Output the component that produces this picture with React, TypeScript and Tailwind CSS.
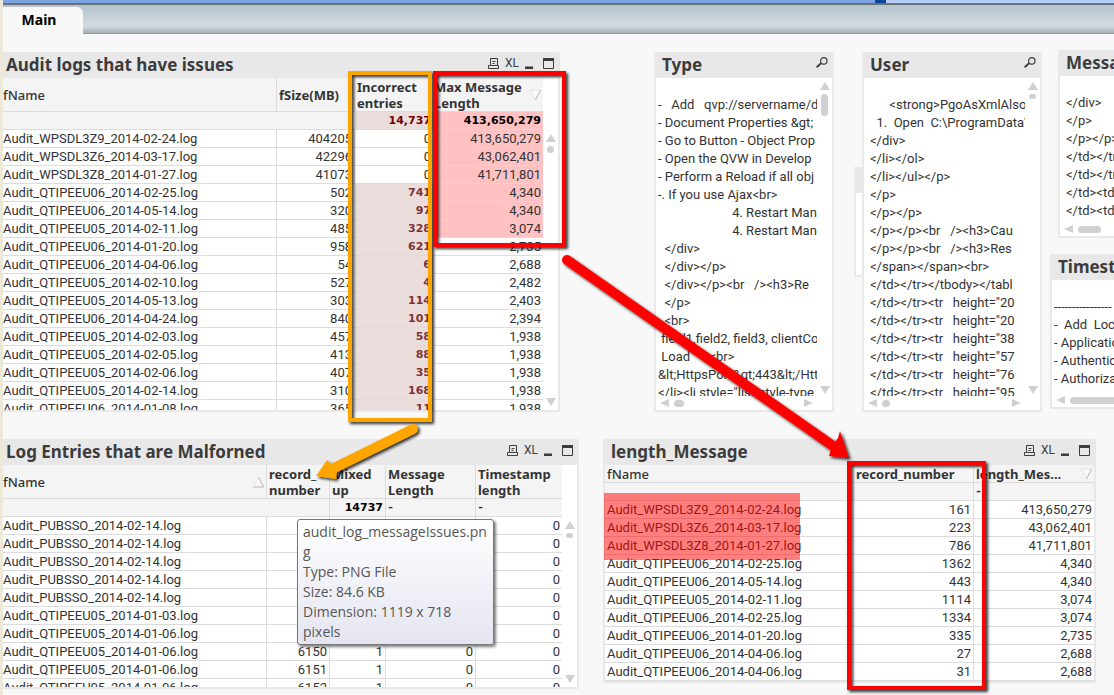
import React, { ReactNode } from "react";
import { twMerge } from "tailwind-merge";

interface Row {
  name: string;
  values: string[];
}

const auditRows: Row[] = [
  { name: "Audit_WPSDL3Z9_2014-02-24.log", values: ["404205", "0", "413,650,279"] },
  { name: "Audit_WPSDL3Z6_2014-03-17.log", values: ["42296", "0", "43,062,401"] },
  { name: "Audit_WPSDL3Z8_2014-01-27.log", values: ["41073", "0", "41,711,801"] },
  { name: "Audit_QTIPEEU06_2014-02-25.log", values: ["502", "741", "4,340"] },
  { name: "Audit_QTIPEEU06_2014-05-14.log", values: ["320", "97", "4,340"] },
  { name: "Audit_QTIPEEU05_2014-02-11.log", values: ["485", "328", "3,074"] },
  { name: "Audit_QTIPEEU06_2014-01-20.log", values: ["958", "621", "2,735"] },
  { name: "Audit_QTIPEEU06_2014-04-06.log", values: ["54", "6", "2,688"] },
  { name: "Audit_QTIPEEU05_2014-02-10.log", values: ["527", "4", "2,482"] },
  { name: "Audit_QTIPEEU05_2014-05-13.log", values: ["303", "114", "2,403"] },
  { name: "Audit_QTIPEEU06_2014-04-24.log", values: ["840", "101", "2,394"] },
  { name: "Audit_QTIPEEU05_2014-02-03.log", values: ["457", "58", "1,938"] },
  { name: "Audit_QTIPEEU05_2014-02-05.log", values: ["413", "88", "1,938"] },
  { name: "Audit_QTIPEEU05_2014-02-06.log", values: ["407", "35", "1,938"] },
  { name: "Audit_QTIPEEU05_2014-02-14.log", values: ["310", "168", "1,938"] },
  { name: "Audit_QTIPEEU06_2014-01-08.log", values: ["365", "11", "1,938"] },
];

const malformedRows: Row[] = [
  { name: "Audit_PUBSSO_2014-02-14.log", values: ["", "", "", "0"] },
  { name: "Audit_PUBSSO_2014-02-14.log", values: ["", "", "", "0"] },
  { name: "Audit_PUBSSO_2014-02-14.log", values: ["", "", "", "0"] },
  { name: "Audit_PUBSSO_2014-02-14.log", values: ["", "", "", "0"] },
  { name: "Audit_PUBSSO_2014-02-14.log", values: ["", "", "", "0"] },
  { name: "Audit_QTIPEEU05_2014-01-03.log", values: ["", "", "", "0"] },
  { name: "Audit_QTIPEEU05_2014-01-06.log", values: ["", "", "", "0"] },
  { name: "Audit_QTIPEEU05_2014-01-06.log", values: ["6150", "1", "0", "0"] },
  { name: "Audit_QTIPEEU05_2014-01-06.log", values: ["6151", "1", "0", "0"] },
  { name: "Audit_QTIPEEU05_2014-01-06.log", values: ["6152", "1", "0", "0"] },
];

const lengthRows: Row[] = [
  { name: "Audit_WPSDL3Z9_2014-02-24.log", values: ["161", "413,650,279"] },
  { name: "Audit_WPSDL3Z6_2014-03-17.log", values: ["223", "43,062,401"] },
  { name: "Audit_WPSDL3Z8_2014-01-27.log", values: ["786", "41,711,801"] },
  { name: "Audit_QTIPEEU06_2014-02-25.log", values: ["1362", "4,340"] },
  { name: "Audit_QTIPEEU06_2014-05-14.log", values: ["443", "4,340"] },
  { name: "Audit_QTIPEEU05_2014-02-11.log", values: ["1114", "3,074"] },
  { name: "Audit_QTIPEEU06_2014-02-25.log", values: ["1334", "3,074"] },
  { name: "Audit_QTIPEEU06_2014-01-20.log", values: ["335", "2,735"] },
  { name: "Audit_QTIPEEU06_2014-04-06.log", values: ["27", "2,688"] },
  { name: "Audit_QTIPEEU06_2014-04-06.log", values: ["31", "2,688"] },
];

const typeItems = [
  "",
  "-   Add   qvp://servername/d",
  "- Document Properties &gt;",
  "- Go to Button - Object Prop",
  "- Open the QVW in Develop",
  "- Perform a Reload if all obj",
  "-. If you use Ajax<br>",
  "                       4. Restart Mana",
  "                       4. Restart Mana",
  "  </div>",
  "  </div></p>",
  "  </div></p><br   /><h3>Re",
  "  </p>",
  "  <br>",
  " field1,field2, field3, clientCo",
  " Load      <br>",
  "&lt;HttpsPort&gt;443&lt;/Htt",
  "</li><li style=\"list-style-type",
];

const userItems = [
  "",
  "      <strong>PgoAsXmlAlso=",
  "  1.  Open  C:\\ProgramData\\",
  "</div>",
  "</li></ol>",
  "</li></ul></p>",
  "</p>",
  "</p></p>",
  "</p></p><br   /><h3>Cau",
  "</p></p><br   /><h3>Res",
  "</span></span><br>",
  "</td></tr></tbody></tabl",
  "</td></tr><tr   height=\"20",
  "</td></tr><tr   height=\"20",
  "</td></tr><tr   height=\"38",
  "</td></tr><tr   height=\"57",
  "</td></tr><tr   height=\"76",
  "</td></tr><tr   height=\"95",
];

const messageItems = ["", "</div>", "</p>", "</p></p>", "</td></tr>", "</td></tr>", "</td><td>", "</td><td>"];

const timestampItems = ["", "----------------", "-  Add  Local", "- Application", "- Authentication", "- Authorization"];

const arrowPaths = {
  up: "M5 0 L10 8 H0 Z",
  down: "M0 0 H10 L5 8 Z",
  left: "M0 4 L9 0 V8 Z",
  right: "M9 4 L0 0 V8 Z",
};

const ScrollArrow = ({ dir }: { dir: keyof typeof arrowPaths }) => (
  <button type="button" aria-label={`scroll ${dir}`} className="block shrink-0">
    <svg width="10" height="8" viewBox="0 0 10 8" className="block">
      <path d={arrowPaths[dir]} fill="#d0d0d0" />
    </svg>
  </button>
);

const VerticalScroll = ({ thumb, className }: { thumb: string; className?: string }) => (
  <div className={twMerge("flex w-[15px] shrink-0 flex-col items-center", className)}>
    <ScrollArrow dir="up" />
    <div className={twMerge("mt-1 w-[7px] rounded-full bg-[#d0d0d0]", thumb)} />
    <div className="grow" />
    <ScrollArrow dir="down" />
  </div>
);

const HorizontalScroll = ({ thumb }: { thumb: string }) => (
  <div className="flex h-[14px] items-center pr-[18px] pl-1">
    <ScrollArrow dir="left" />
    <div className={twMerge("ml-1 h-[7px] shrink-0 rounded-full bg-[#d0d0d0]", thumb)} />
    <div className="grow" />
    <ScrollArrow dir="right" />
  </div>
);

const SortMark = ({ up }: { up?: boolean }) => (
  <svg width="11" height="12" viewBox="0 0 11 12" className="mr-0.5 shrink-0" fill="none">
    {up ? (
      <>
        <path d="M0.5 11 L5.5 1 L10.5 11 Z" fill="#fafafa" />
        <path d="M0.5 11 L5.5 1" stroke="#e4e4e4" />
        <path d="M5.5 1 L10.5 11 H0.5" stroke="#b4b4b4" />
      </>
    ) : (
      <>
        <path d="M0.5 1 H10.5 L5.5 11 Z" fill="#fafafa" />
        <path d="M10.5 1 H0.5 L5.5 11" stroke="#e4e4e4" />
        <path d="M5.5 11 L10.5 1" stroke="#b4b4b4" />
      </>
    )}
  </svg>
);

const WindowIcons = () => (
  <div className="mt-[5px] flex h-[12px] items-end gap-1.5 self-start text-[#3c3c3c]">
    <button type="button" aria-label="Print">
      <svg width="11" height="11" viewBox="0 0 11 11" className="block" fill="none" stroke="currentColor">
        <path d="M2.5 7 V0.5 H9.5 V7 M4.5 3.5 H7.5 M4.5 5.5 H6.5" />
        <path d="M2.5 7.5 H0.5 V10.5 H10.5 V7.5 H2.5" />
      </svg>
    </button>
    <button type="button" className="font-[Roboto,sans-serif] text-[12px] leading-[12px]">
      XL
    </button>
    <button type="button" aria-label="Minimize">
      <svg width="8" height="11" viewBox="0 0 8 11" className="block">
        <path d="M0 8.5 H8 V11 H0 Z" fill="currentColor" />
      </svg>
    </button>
    <button type="button" aria-label="Maximize" className="ml-1">
      <svg width="11" height="11" viewBox="0 0 11 11" className="block">
        <path d="M0.5 0.5 H10.5 V10.5 H0.5 Z" fill="none" stroke="currentColor" />
        <path d="M0 0 H11 V3 H0 Z" fill="currentColor" />
      </svg>
    </button>
  </div>
);

const SearchIcon = () => (
  <button type="button" aria-label="Search" className="mt-[5px] self-start text-[#3c3c3c]">
    <svg width="12" height="11" viewBox="0 0 12 11" className="block" fill="none" stroke="currentColor">
      <circle cx="7.8" cy="3.9" r="3.2" strokeWidth="1.2" />
      <path d="M5.2 6.2 L0.6 10.2" strokeWidth="1.8" />
    </svg>
  </button>
);

interface PanelProps {
  title: string;
  icons?: ReactNode;
  cut?: boolean;
  className?: string;
  children: ReactNode;
}

// cut: the panel runs out of the window on its left side
const Panel = ({ title, icons, cut, className, children }: PanelProps) => (
  <section
    className={twMerge(
      "min-w-0 self-start overflow-hidden border-r-2 border-b-2 border-[#e8e8e8] bg-white",
      cut ? "rounded-r-[2px]" : "rounded-[2px] border-l-2",
      className
    )}
  >
    <div className={twMerge("flex h-[26px] items-center justify-between bg-[#e8e8e8] pr-1", cut ? "pl-[3px]" : "pl-1.5")}>
      <h2 className="font-['Noto_Sans','Open_Sans',sans-serif] text-[17px] leading-[26px] font-bold whitespace-nowrap text-[#3c3c3c]">
        {title}
      </h2>
      {icons}
    </div>
    {children}
  </section>
);

const ListLines = ({ items, className }: { items: string[]; className: string }) => (
  <ul className={twMerge("min-w-0 grow overflow-hidden", className)}>
    {items.map((item, i) => (
      <li key={i} className="h-[18px] leading-[18px] whitespace-pre">
        {item}
      </li>
    ))}
  </ul>
);

const headCell =
  "border-b border-r border-[#dcdcdc] bg-[#f4f4f4] p-0 pl-0.5 text-left font-['Noto_Sans','Open_Sans',sans-serif] leading-[16px] font-bold";
const nameHead = "font-medium";
const sumCell = "h-[18px] border-b border-r border-[#dcdcdc] bg-[#f4f4f4] p-0 pr-0.5";
const cell = "h-[18px] border-b border-r border-[#dcdcdc] p-0 leading-[17px] whitespace-nowrap";
const boldNumber = "font-['DejaVu_Sans',Verdana,sans-serif] text-[11px] leading-[17px] font-bold";
const tableClass = "w-full table-fixed border-separate border-spacing-0 text-[13px] leading-[17px] text-[#333]";

const AuditTable = () => (
  <table className={tableClass}>
    <colgroup>
      <col />
      <col className="w-[78px]" />
      <col className="w-[79px]" />
      <col className="w-[109px]" />
    </colgroup>
    <thead>
      <tr className="h-[34px]">
        <th className={twMerge(headCell, nameHead, "pl-0")}>fName</th>
        <th className={headCell}>fSize(MB)</th>
        <th className={headCell}>Incorrect entries</th>
        <th className={twMerge(headCell, "border-r-0 pl-0")}>
          <div className="flex items-center justify-between">
            <span>
              Max Message
              <br />
              Length
            </span>
            <SortMark />
          </div>
        </th>
      </tr>
      <tr>
        <td className={twMerge(sumCell, "border-r-0")} />
        <td className={twMerge(sumCell, "border-r-0")} />
        <td className={twMerge(sumCell, boldNumber, "bg-[#ecdddd] text-right text-[#700000]")}>14,737</td>
        <td className={twMerge(sumCell, boldNumber, "border-r-0 bg-[#ffc1c1] text-right text-black")}>413,650,279</td>
      </tr>
    </thead>
    <tbody>
      {auditRows.map((row, i) => (
        <tr key={i}>
          <td className={cell}>{row.name}</td>
          <td className={twMerge(cell, "pr-0.5 text-right")}>{row.values[0]}</td>
          <td
            className={twMerge(
              cell,
              "pr-0.5 text-right",
              row.values[1] !== "0" && "bg-[#ecdddd] text-[#7d3333]",
              row.values[1] !== "0" && boldNumber
            )}
          >
            {row.values[1]}
          </td>
          <td className={twMerge(cell, "border-r-0 pr-0.5 text-right", i < 6 && "bg-[#ffc1c1]")}>{row.values[2]}</td>
        </tr>
      ))}
    </tbody>
  </table>
);

const MalformedTable = () => (
  <table className={tableClass}>
    <colgroup>
      <col />
      <col className="w-[63px]" />
      <col className="w-[56px]" />
      <col className="w-[90px]" />
      <col className="w-[86px]" />
    </colgroup>
    <thead>
      <tr className="h-[34px]">
        <th className={twMerge(headCell, nameHead, "pl-0")}>
          <div className="flex items-center justify-between">
            fName
            <SortMark up />
          </div>
        </th>
        <th className={headCell}>
          record_
          <br />
          number
        </th>
        <th className={headCell}>
          Mixed
          <br />
          up
        </th>
        <th className={headCell}>
          Message
          <br />
          Length
        </th>
        <th className={twMerge(headCell, "border-r-0")}>
          Timestamp
          <br />
          length
        </th>
      </tr>
      <tr>
        <td className={twMerge(sumCell, "border-r-0")} />
        <td className={sumCell} />
        <td className={twMerge(sumCell, boldNumber, "text-right text-black")}>14737</td>
        <td className={twMerge(sumCell, "pl-0.5 font-bold")}>-</td>
        <td className={twMerge(sumCell, "border-r-0 pl-0.5 font-bold")}>-</td>
      </tr>
    </thead>
    <tbody>
      {malformedRows.map((row, i) => (
        <tr key={i}>
          <td className={cell}>{row.name}</td>
          {row.values.map((value, j) => (
            <td key={j} className={twMerge(cell, "pr-0.5 text-right", j === 3 && "border-r-0")}>
              {value}
            </td>
          ))}
        </tr>
      ))}
    </tbody>
  </table>
);

const LengthTable = () => (
  <table className={tableClass}>
    <colgroup>
      <col />
      <col className="w-[120px]" />
      <col className="w-[120px]" />
    </colgroup>
    <thead>
      <tr className="h-[18px]">
        <th className={twMerge(headCell, nameHead)}>fName</th>
        <th className={headCell}>record_number</th>
        <th className={twMerge(headCell, "border-r-0")}>
          <div className="flex items-center justify-between">
            length_Mes...
            <SortMark />
          </div>
        </th>
      </tr>
      <tr>
        <td className={sumCell} />
        <td className={sumCell} />
        <td className={twMerge(sumCell, "border-r-0 pl-0.5 font-bold")}>-</td>
      </tr>
    </thead>
    <tbody>
      {lengthRows.map((row, i) => (
        <tr key={i}>
          <td className={twMerge(cell, "pl-0.5")}>{row.name}</td>
          <td className={twMerge(cell, "pr-0.5 text-right")}>{row.values[0]}</td>
          <td className={twMerge(cell, "border-r-0 pr-0.5 text-right")}>{row.values[1]}</td>
        </tr>
      ))}
    </tbody>
  </table>
);

// hand drawn marks on top of the dashboard
const Annotations = () => (
  <svg
    className="pointer-events-none absolute top-0 left-0 h-[695px] w-full"
    viewBox="0 0 1114 695"
    preserveAspectRatio="none"
    fill="none"
  >
    <defs>
      <filter id="markShadow" x="-10%" y="-10%" width="120%" height="120%">
        <feDropShadow dx="2" dy="2" stdDeviation="1.5" floodColor="#000" floodOpacity="0.8" />
      </filter>
    </defs>
    <rect x="604" y="493" width="196" height="67" fill="#ff0000" fillOpacity="0.5" />
    <g filter="url(#markShadow)">
      <rect x="350" y="73" width="80" height="347" stroke="#ffa500" strokeWidth="4" />
      <path d="M413 429 L330 470" stroke="#ffa500" strokeWidth="10" strokeLinecap="round" />
      <path d="M316 476 L327 460 L331 464 L337 472 L336 479 Z" fill="#ffa500" />
    </g>
    <g filter="url(#markShadow)">
      <rect x="435" y="73" width="129" height="172" stroke="#ff0000" strokeWidth="4" />
      <rect x="849" y="463" width="135" height="225" stroke="#ff0000" strokeWidth="4" />
      <path d="M567 260 L836 448" stroke="#ff0000" strokeWidth="10" strokeLinecap="round" />
      <path d="M849 458 L829 456 L832 446 L838 438 L840 431 Z" fill="#ff0000" />
    </g>
  </svg>
);

const FileTooltip = () => (
  <div
    role="tooltip"
    className="absolute top-[519px] left-[297px] w-[197px] rounded-[3px] border border-[#767676] bg-linear-to-b from-white to-[#e4e5f0] px-[5px] py-0.5 font-['Open_Sans','Noto_Sans',sans-serif] text-[14px] leading-[20px] text-[#575757] shadow-[2px_2px_3px_rgba(0,0,0,0.5)]"
  >
    <p className="break-all">audit_log_messageIssues.png</p>
    <p>Type: PNG File</p>
    <p>Size: 84.6 KB</p>
    <p>Dimension: 1119 x 718 pixels</p>
  </div>
);

const App = () => {
  return (
    <div className="relative overflow-hidden font-[Roboto,'Noto_Sans',sans-serif] text-[13px] text-[#333]">
      <div className="min-h-screen border-l-[3px] border-[#ece9d8] bg-[#f8f8f8]">
        <header>
          <div className="flex h-[3px]">
            <div className="grow bg-[#7ba4e0]" />
            <div className="w-[11px] bg-[#0a46a0]" />
            <div className="w-[20.5%] bg-[#b5cef8]" />
          </div>
          <nav className="flex h-[31px] items-end border-t-2 border-b border-t-[#6b7078] border-b-[#93989c] bg-linear-to-b from-[#b2c4cc] via-[#d3dae1] via-75% to-[#a9b0b3]">
            <button
              type="button"
              className="-mb-px h-[27px] w-[80px] rounded-tr-[6px] bg-[#f8f8f8] pr-2 pb-0.5 font-['Noto_Sans','Open_Sans',sans-serif] text-[14px] leading-[20px] font-bold text-black"
            >
              Main
            </button>
          </nav>
        </header>

        <main>
          <div className="grid grid-cols-[557fr_94fr_180fr_28fr_180fr_8fr_64fr] pt-4">
            <Panel title="Audit logs that have issues" icons={<WindowIcons />} cut className="mt-0.5">
              <div className="flex h-[332px] overflow-hidden">
                <div className="min-w-0 grow">
                  <AuditTable />
                </div>
                <VerticalScroll thumb="h-[7px]" className="pt-14 pb-1" />
              </div>
            </Panel>

            <Panel title="Type" icons={<SearchIcon />} className="col-start-3 mt-0.5">
              <div className="flex h-[318px]">
                <ListLines items={typeItems} className="pl-0.5" />
                <VerticalScroll thumb="h-[22px]" className="pt-1 pb-0.5" />
              </div>
              <HorizontalScroll thumb="w-[10px]" />
            </Panel>

            <div className="col-start-4 mt-[117px] ml-auto h-[110px] w-2 self-start border-b-2 border-l-2 border-[#e8e8e8] bg-white">
              <div className="h-[26px] bg-[#e8e8e8]" />
            </div>

            <Panel title="User" icons={<SearchIcon />} className="col-start-5 mt-0.5">
              <div className="flex h-[318px]">
                <ListLines items={userItems} className="pl-1.5" />
                <VerticalScroll thumb="h-[5px]" className="pt-1 pb-0.5" />
              </div>
              <HorizontalScroll thumb="w-[8px]" />
            </Panel>

            <div className="col-start-7 flex min-w-0 flex-col gap-4 overflow-hidden">
              <Panel title="Message" className="ml-2 w-[180px]">
                <ListLines items={messageItems} className="h-[146px] pl-1.5" />
                <HorizontalScroll thumb="w-[23px]" />
              </Panel>
              <Panel title="Timestamp" className="w-[180px]">
                <ListLines items={timestampItems} className="h-[113px] pl-0.5" />
                <HorizontalScroll thumb="w-[60px]" />
              </Panel>
            </div>
          </div>

          <div className="grid grid-cols-[576fr_24fr_493fr_18fr] pt-[27px]">
            <Panel title="Log Entries that are Malforned" icons={<WindowIcons />} cut>
              <div className="flex h-[222px] overflow-hidden">
                <div className="min-w-0 grow">
                  <MalformedTable />
                </div>
                <VerticalScroll thumb="h-[5px]" className="pt-14 pb-1" />
              </div>
            </Panel>

            <Panel title="length_Message" icons={<WindowIcons />} className="col-start-3">
              <LengthTable />
            </Panel>
          </div>
        </main>
      </div>

      <FileTooltip />
      <Annotations />
    </div>
  );
};

export default App;
